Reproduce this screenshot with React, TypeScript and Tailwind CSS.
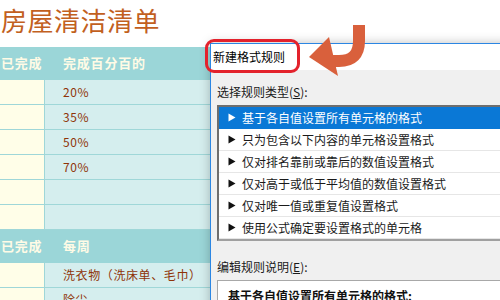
import React from "react";

const cjk = { fontFamily: '"Noto Sans CJK SC", "Noto Sans", sans-serif' };

function Tri({ color }: { color: string }) {
  return (
    <svg width="8" height="9" viewBox="0 0 8 9" className="shrink-0">
      <polygon points="0.5,0.5 7.5,4.5 0.5,8.5" fill={color} />
    </svg>
  );
}

const rules = [
  "基于各自值设置所有单元格的格式",
  "只为包含以下内容的单元格设置格式",
  "仅对排名靠前或靠后的数值设置格式",
  "仅对高于或低于平均值的数值设置格式",
  "仅对唯一值或重复值设置格式",
  "使用公式确定要设置格式的单元格",
];

function Row({ text }: { text?: string }) {
  return (
    <div className="flex h-[25px] border-b border-[#9fd7d8]">
      <div className="w-[45px] bg-[#fffee8] border-r border-[#9fd7d8]" />
      <div className="flex-1 bg-[#d5eeee] pl-[18px] flex items-center text-[12px] text-[#8f3408] tracking-[0.6px]">
        {text}
      </div>
    </div>
  );
}

function Header({ b }: { b: string }) {
  return (
    <div className="flex h-[33px] bg-[#9bd6d8] border-b border-[#9bd6d8] items-center text-[13px] font-bold text-[#fffbe6] tracking-[0.8px]">
      <div className="w-[46px] pl-[1px]">已完成</div>
      <div className="pl-[17px]">{b}</div>
    </div>
  );
}

export default function App() {
  return (
    <div className="relative w-[500px] h-[300px] overflow-hidden bg-white" style={cjk}>
      {/* spreadsheet */}
      <div className="flex flex-col">
        <div className="h-[47px] pl-[1px] pt-[3px] text-[26px] leading-[34px] text-[#c2601e] tracking-[0.5px]">
          房屋清洁清单
        </div>
        <Header b="完成百分百的" />
        <Row text="20%" />
        <Row text="35%" />
        <Row text="50%" />
        <Row text="70%" />
        <Row />
        <Row />
        <Header b="每周" />
        <Row text="洗衣物（洗床单、毛巾）" />
        <Row text="除尘" />
      </div>

      {/* dialog */}
      <div className="absolute left-[210px] top-[43px] w-[320px] h-[300px] border-l border-t border-[#2b86e3] bg-[#f0f0f0] shadow-[0_0_10px_rgba(0,0,0,0.25)] flex flex-col">
        <div className="h-[26px] bg-white flex items-center pl-[2px] text-[12px] text-black">
          新建格式规则
        </div>
        <div className="pl-[6px] pt-[14px] text-[12px] leading-[16px] text-[#1a1a1a]">
          选择规则类型(<span className="underline">S</span>):
        </div>
        <div className="ml-[6px] mt-[5px] border-2 border-t-[#6e6e6e] border-l-[#6e6e6e] border-r-[#a0a0a0] border-b-[#a0a0a0] bg-white flex flex-col">
          {rules.map((r, i) => (
            <div
              key={r}
              className={
                "h-[22px] flex items-center gap-[6px] pl-[9px] text-[12px] border-b " +
                (i === 0
                  ? "bg-[#0a78d6] text-white border-[#0a78d6]"
                  : "text-[#1a1a1a] border-[#e6e6e6]")
              }
            >
              <Tri color={i === 0 ? "#ffffff" : "#111111"} />
              <span>{r}</span>
            </div>
          ))}
        </div>
        <div className="pl-[6px] pt-[18px] text-[12px] leading-[16px] text-[#1a1a1a]">
          编辑规则说明(<span className="underline">E</span>):
        </div>
        <div className="ml-[6px] mt-[5px] h-[60px] border border-[#a8a8a8] bg-white pl-[10px] pt-[6px] text-[12px] font-bold text-[#111]">
          基于各自值设置所有单元格的格式:
        </div>
      </div>

      {/* red highlight box */}
      <div className="absolute left-[205px] top-[39px] w-[95px] h-[34px] rounded-[9px] border-[3px] border-[#e3222c]" />

      {/* arrow */}
      <svg className="absolute left-0 top-0 pointer-events-none" width="500" height="300" viewBox="0 0 500 300">
        <path d="M359 25 V41 Q359 61 339 61 H328" fill="none" stroke="#d9603c" strokeWidth="12" />
        <polygon points="309,57 329,37 338,76" fill="#d9603c" />
      </svg>
    </div>
  );
}
